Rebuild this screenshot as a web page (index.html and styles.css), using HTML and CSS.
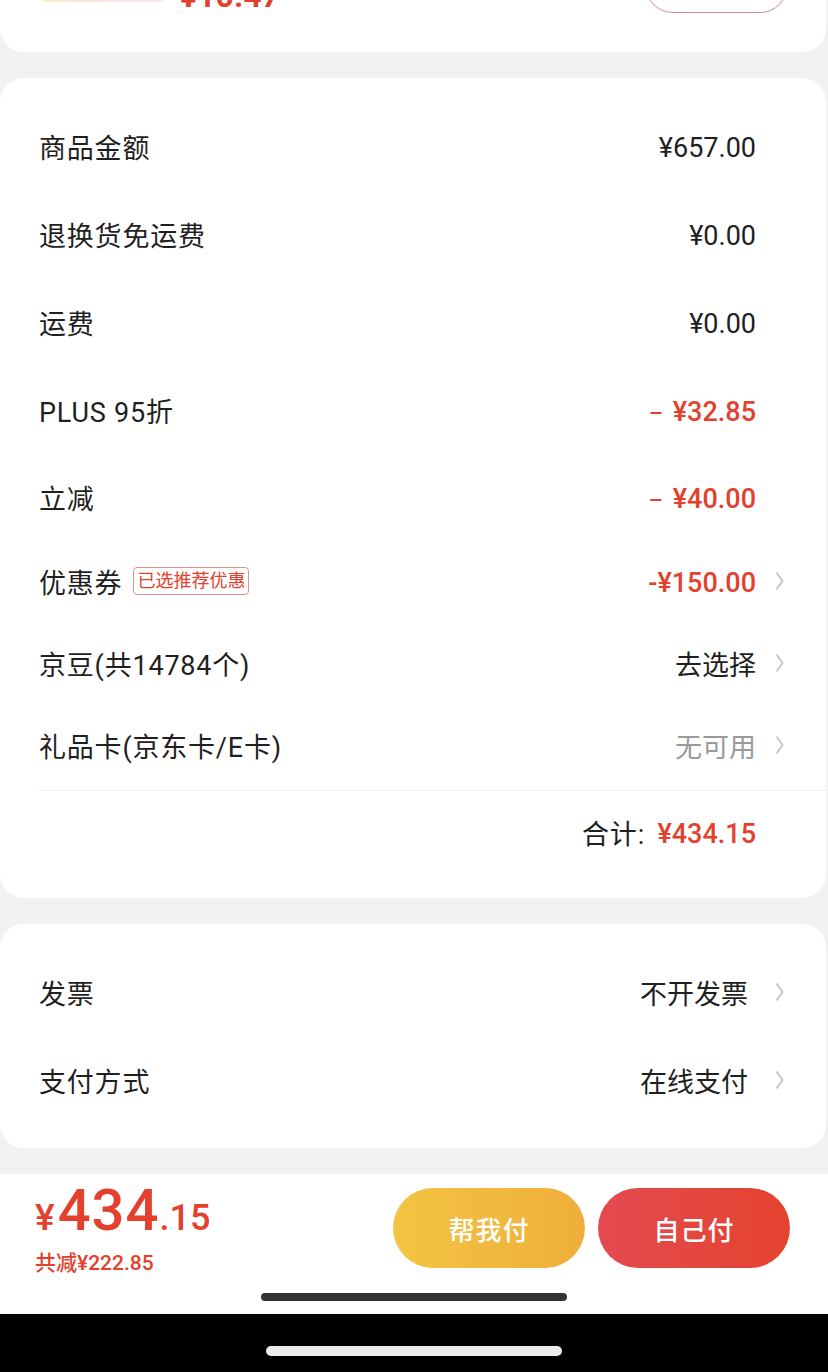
FILE: index.html
```html
<!DOCTYPE html>
<html lang="zh-CN">
<head>
    <meta charset="UTF-8">
    <meta name="viewport" content="width=device-width, initial-scale=1.0">
    <title>确认订单</title>
    <link rel="stylesheet" href="styles.css">
</head>
<body>
    <div class="page">
        <!-- 商品卡片 (上半部分已滚出屏幕) -->
        <div class="card card-top">
            <div class="goods-row">
                <div class="goods-thumb"></div>
                <span class="goods-price">¥10.47</span>
                <span class="goods-btn"></span>
            </div>
        </div>

        <!-- 金额明细 -->
        <div class="card card-amount">
            <div class="row">
                <span class="row-label">商品金额</span>
                <span class="row-value num">¥657.00</span>
                <span class="row-arrow"></span>
            </div>
            <div class="row">
                <span class="row-label">退换货免运费</span>
                <span class="row-value num">¥0.00</span>
                <span class="row-arrow"></span>
            </div>
            <div class="row">
                <span class="row-label">运费</span>
                <span class="row-value num">¥0.00</span>
                <span class="row-arrow"></span>
            </div>
            <div class="row">
                <span class="row-label">PLUS 95折</span>
                <span class="row-value num red"><span class="minus">–</span>¥32.85</span>
                <span class="row-arrow"></span>
            </div>
            <div class="row row-last">
                <span class="row-label">立减</span>
                <span class="row-value num red"><span class="minus">–</span>¥40.00</span>
                <span class="row-arrow"></span>
            </div>
            <div class="row row-short">
                <span class="row-label">优惠券 <span class="tag">已选推荐优惠</span></span>
                <span class="row-value num red">-¥150.00</span>
                <span class="row-arrow">
                    <svg width="9" height="20" viewBox="0 0 9 20"><path d="M1.5 1.5 L7.5 10 L1.5 18.5" fill="none" stroke="#c4c4c4" stroke-width="1.8"/></svg>
                </span>
            </div>
            <div class="row row-short">
                <span class="row-label">京豆(共14784个)</span>
                <span class="row-value">去选择</span>
                <span class="row-arrow">
                    <svg width="9" height="20" viewBox="0 0 9 20"><path d="M1.5 1.5 L7.5 10 L1.5 18.5" fill="none" stroke="#c4c4c4" stroke-width="1.8"/></svg>
                </span>
            </div>
            <div class="row row-short">
                <span class="row-label">礼品卡(京东卡/E卡)</span>
                <span class="row-value gray">无可用</span>
                <span class="row-arrow">
                    <svg width="9" height="20" viewBox="0 0 9 20"><path d="M1.5 1.5 L7.5 10 L1.5 18.5" fill="none" stroke="#c4c4c4" stroke-width="1.8"/></svg>
                </span>
            </div>
            <div class="total">
                <span class="total-label">合计:</span>
                <span class="total-value num">¥434.15</span>
            </div>
        </div>

        <!-- 发票 / 支付方式 -->
        <div class="card card-other">
            <div class="row">
                <span class="row-label">发票</span>
                <span class="row-value">不开发票</span>
                <span class="row-arrow wide">
                    <svg width="9" height="20" viewBox="0 0 9 20"><path d="M1.5 1.5 L7.5 10 L1.5 18.5" fill="none" stroke="#c4c4c4" stroke-width="1.8"/></svg>
                </span>
            </div>
            <div class="row">
                <span class="row-label">支付方式</span>
                <span class="row-value">在线支付</span>
                <span class="row-arrow wide">
                    <svg width="9" height="20" viewBox="0 0 9 20"><path d="M1.5 1.5 L7.5 10 L1.5 18.5" fill="none" stroke="#c4c4c4" stroke-width="1.8"/></svg>
                </span>
            </div>
        </div>

        <!-- 底部支付栏 -->
        <div class="pay-bar">
            <div class="pay-row">
                <div class="pay-price">
                    <div class="pay-total num"><span class="yen">¥</span><span class="int">434</span><span class="dec">.15</span></div>
                    <div class="pay-save num">共减¥222.85</div>
                </div>
                <div class="pay-btns">
                    <a href="#" class="btn btn-help">帮我付</a>
                    <a href="#" class="btn btn-self">自己付</a>
                </div>
            </div>
            <div class="home-bar"></div>
        </div>

        <!-- 系统导航条 -->
        <div class="sys-nav">
            <div class="sys-indicator"></div>
        </div>
    </div>
</body>
</html>
```

FILE: styles.css
```css
/* 全局初始化 */
* {
    margin: 0;
    padding: 0;
    box-sizing: border-box;
}

body {
    font-family: Roboto, "Noto Sans CJK SC", sans-serif;
    background: #f2f2f2;
    color: #1f1f1f;
}

.page {
    width: 828px;
    height: 1372px;
    overflow: hidden;
    display: flex;
    flex-direction: column;
}

/* 数字字体 */
.num {
    font-family: Roboto, "Noto Sans CJK SC", sans-serif;
}

.red {
    color: #e3402d !important;
    font-weight: 500;
}

.gray {
    color: #9a9a9a !important;
}

/* 减号略宽 */
.minus {
    font-size: 22px;
    margin-right: 10px;
}

/* 通用卡片 */
.card {
    background: #fff;
    border-radius: 24px;
    width: 826px;
    flex-shrink: 0;
}

/* 顶部商品卡片 (只露出底部) */
.card-top {
    height: 52px;
    overflow: hidden;
    border-radius: 0 0 24px 24px;
}

.goods-row {
    display: flex;
    align-items: flex-end;
    height: 63px;
    margin-top: -50px;
    padding: 0 38px 0 40px;
}

.goods-thumb {
    width: 125px;
    height: 60px;
    margin-bottom: 11px;
    border-radius: 6px;
    background: linear-gradient(90deg, #f1f3c8 0%, #fbe3e3 40%, #fde9ea 100%);
}

.goods-price {
    margin-left: 15px;
    margin-bottom: 1px;
    font-size: 32px;
    line-height: 32px;
    font-weight: 700;
    color: #e3402d;
}

.goods-btn {
    margin-left: auto;
    width: 143px;
    height: 56px;
    border: 1px solid #d98a80;
    border-radius: 28px;
}

/* 金额明细卡片 */
.card-amount {
    margin-top: 26px;
    padding: 24px 0 24px 39px;
}

.row {
    display: flex;
    align-items: center;
    height: 88px;
    padding-right: 42px;
    font-size: 27px;
}

.row-last {
    height: 86px;
}

.row-short {
    height: 82px;
}

.row-label {
    flex: 1;
    display: flex;
    align-items: center;
    color: #1f1f1f;
    letter-spacing: 0.8px;
}

.row-value {
    color: #1f1f1f;
    font-size: 27px;
}

.row-value.num {
    padding-top: 4px;
}

/* 右侧箭头占位 */
.row-arrow {
    width: 28px;
    display: flex;
    justify-content: flex-end;
    align-items: center;
}

.row-arrow.wide {
    width: 36px;
}

.row-arrow svg {
    display: block;
}

/* 优惠券标签 */
.tag {
    display: inline-block;
    margin-left: 11px;
    padding: 0 3px;
    height: 28px;
    line-height: 26px;
    font-size: 18px;
    color: #e3402d;
    border: 1px solid #e3938a;
    border-radius: 4px;
    letter-spacing: 0;
}

/* 合计 */
.total {
    display: flex;
    justify-content: flex-end;
    align-items: center;
    height: 84px;
    margin-top: 4px;
    padding-right: 70px;
    border-top: 1px solid #eeeeee;
    font-size: 27px;
}

.total-label {
    color: #1f1f1f;
    margin-right: 12px;
    letter-spacing: 1px;
}

.total-value {
    color: #e3402d;
    font-weight: 500;
    padding-top: 3px;
}

/* 发票 / 支付方式卡片 */
.card-other {
    margin-top: 26px;
    padding: 24px 0 24px 39px;
}

/* 底部支付栏 */
.pay-bar {
    margin-top: 26px;
    background: #fff;
    padding-top: 14px;
    height: 140px;
    flex-shrink: 0;
    display: flex;
    flex-direction: column;
}

.pay-row {
    display: flex;
    align-items: center;
    height: 80px;
    padding: 0 38px 0 35px;
}

.pay-price {
    flex: 1;
    color: #e3402d;
}

.pay-total {
    height: 58px;
    line-height: 58px;
    font-weight: 500;
    white-space: nowrap;
}

.pay-total .yen {
    font-size: 37px;
    margin-right: 3px;
}

.pay-total .int {
    font-size: 58px;
    letter-spacing: 1px;
}

.pay-total .dec {
    font-size: 36px;
}

.pay-save {
    margin-top: 12px;
    font-size: 21px;
    line-height: 24px;
    font-weight: 500;
}

.pay-btns {
    display: flex;
    gap: 13px;
}

.btn {
    width: 192px;
    height: 80px;
    border-radius: 40px;
    display: flex;
    justify-content: center;
    align-items: center;
    color: #fff;
    text-decoration: none;
    font-size: 26px;
    font-weight: 500;
    letter-spacing: 1px;
}

.btn-help {
    background: linear-gradient(90deg, #f3c443 0%, #efae3b 100%);
}

.btn-self {
    background: linear-gradient(90deg, #e34a50 0%, #e5432f 100%);
}

/* 底部横条 */
.home-bar {
    align-self: center;
    width: 306px;
    height: 8px;
    margin-top: 25px;
    border-radius: 4px;
    background: #333;
}

/* 系统导航条 */
.sys-nav {
    height: 58px;
    flex-shrink: 0;
    background: #000;
    display: flex;
    justify-content: center;
}

.sys-indicator {
    width: 296px;
    height: 10px;
    margin-top: 32px;
    border-radius: 5px;
    background: #ebebeb;
}
```
